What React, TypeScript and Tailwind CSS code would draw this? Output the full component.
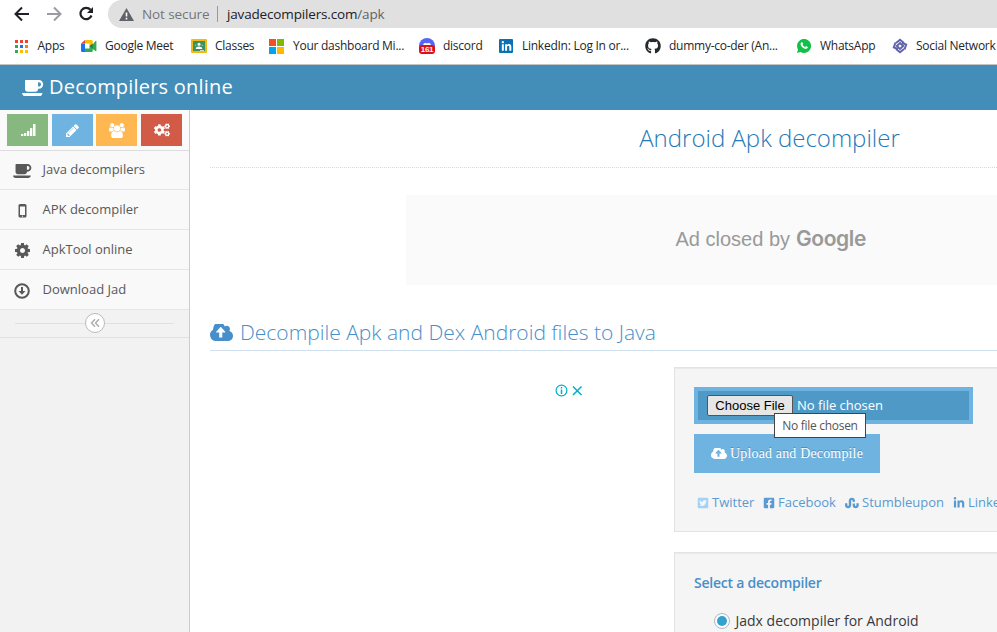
import React from 'react';
import type { ReactNode } from 'react';
import {
  FaCogs, FaTwitterSquare, FaFacebookSquare, FaStumbleupon, FaLinkedinIn, FaGithub,
} from 'react-icons/fa';

function Coffee({ className }: { className: string }) {
  return (
    <svg viewBox="0 256 1920 1408" className={className} fill="currentColor">
      <path d="M1664 640q0-80-56-136t-136-56h-64v384h64q80 0 136-56t56-136zm-1664 768h1792q0 106-75 181t-181 75h-1280q-106 0-181-75t-75-181zm1856-768q0 159-112.5 271.5t-271.5 112.5h-64v32q0 92-66 158t-158 66h-704q-92 0-158-66t-66-158v-736q0-26 19-45t45-19h1152q159 0 271.5 112.5t112.5 271.5z" />
    </svg>
  );
}

function CloudUpload({ className }: { className: string }) {
  return (
    <svg viewBox="0 256 1920 1280" preserveAspectRatio="none" className={className} fill="currentColor">
      <path d="M1280 864q0-14-9-23l-352-352q-9-9-23-9t-23 9l-351 351q-10 12-10 24 0 14 9 23t23 9h224v352q0 13 9.5 22.5t22.5 9.5h192q13 0 22.5-9.5t9.5-22.5v-352h224q13 0 22.5-9.5t9.5-22.5zm640 288q0 159-112.5 271.5t-271.5 112.5h-1088q-185 0-316.5-131.5t-131.5-316.5q0-130 70-240t188-165q-2-30-2-43 0-212 150-362t362-150q156 0 285.5 87t188.5 231q71-62 166-62 106 0 181 75t75 181q0 76-41 138 130 31 213.5 135.5t83.5 238.5z" />
    </svg>
  );
}

function Pencil() {
  return (
    <svg viewBox="128 128 1536 1536" className="size-[13px]" fill="currentColor">
      <path d="M491 1536l91-91-235-235-91 91v107h128v128h107zm523-928q0-22-22-22-10 0-17 7l-542 542q-7 7-7 17 0 22 22 22 10 0 17-7l542-542q7-7 7-17zm-54-192l416 416-832 832H128v-416zm683 96q0 53-37 90l-166 166-416-416 166-165q36-38 90-38 53 0 91 38l235 234q37 39 37 91z" />
    </svg>
  );
}

function Cog() {
  return (
    <svg viewBox="128 128 1536 1536" className="size-[15px]" fill="currentColor">
      <path d="M1152 896q0-106-75-181t-181-75-181 75-75 181 75 181 181 75 181-75 75-181zm512-109v222q0 12-8 23t-20 13l-185 28q-19 54-39 91 35 50 107 138 10 12 10 25t-9 23q-27 37-99 108t-94 71q-12 0-26-9l-138-108q-44 23-91 38-16 136-29 186-7 28-36 28H785q-14 0-24.500-8.500T749 1635l-28-184q-49-16-90-37l-141 107q-10 9-25 9-14 0-25-11-126-114-165-168-7-10-7-23 0-12 8-23 15-21 51-66.500t54-70.500q-27-50-41-99l-183-27q-13-2-21-12.500t-8-23.500V785q0-12 8-23t19-13l186-28q14-46 39-92-40-57-107-138-10-12-10-24 0-10 9-23 26-36 98.500-107.500T465 263q13 0 26 10l138 107q44-23 91-38 16-136 29-186 7-28 36-28h222q14 0 24.500 8.500T1043 158l28 184q49 16 90 37l142-107q9-9 24-9 13 0 25 10 129 119 165 170 7 8 7 22 0 12-8 23-15 21-51 66.500t-54 70.500q26 50 41 98l183 28q13 2 21 12.500t8 23.500z" />
    </svg>
  );
}

function Users() {
  return (
    <svg viewBox="0 0 1920 1792" className="h-[15px] w-4" fill="currentColor">
      <path d="M593 896q-162 5-265 128H194q-82 0-138-40.5T0 865q0-353 124-353 6 0 43.5 21t97.5 42.5T384 597q67 0 133-23-5 37-5 66 0 139 81 256zm1071 637q0 120-73 189.5t-194 69.5H523q-121 0-194-69.5T256 1533q0-53 3.5-103.5t14-109T300 1212t43-97.5 62-81 85.5-53.5T602 960q10 0 43 21.5t73 48 107 48 135 21.5 135-21.5 107-48 73-48 43-21.5q61 0 111.5 20t85.5 53.5 62 81 43 97.5 26.5 108.5 14 109 3.5 103.5zM640 256q0 106-75 181t-181 75-181-75-75-181 75-181T384 0t181 75 75 181zm704 384q0 159-112.5 271.5T960 1024 688.5 911.5 576 640t112.5-271.5T960 256t271.5 112.5T1344 640zm576 225q0 78-56 118.5t-138 40.5h-134q-103-123-265-128 81-117 81-256 0-29-5-66 66 23 133 23 59 0 119-21.5t97.5-42.5 43.5-21q124 0 124 353zm-128-609q0 106-75 181t-181 75-181-75-75-181 75-181 181-75 181 75 75 181z" />
    </svg>
  );
}

function Signal() {
  return (
    <svg viewBox="0 0 16 14" className="h-3.5 w-4" fill="currentColor">
      <path d="M1 11h2.300v2H1zM4 10h2.300v3H4zM7 8h2.300v5H7zM10 5h2.300v8H10zM13 1h2.500v12H13z" />
    </svg>
  );
}

function AppsIcon() {
  return (
    <svg viewBox="0 0 13 13" className="size-[13px]">
      <path fill="#ea4335" d="M0 0h3v3H0zM5 0h3v3H5zM10 0h3v3h-3z" />
      <path fill="#34a853" d="M0 5h3v3H0zM0 10h3v3H0z" />
      <path fill="#1a73e8" d="M5 5h3v3H5z" />
      <path fill="#ea8600" d="M10 5h3v3h-3z" />
      <path fill="#fbbc04" d="M5 10h3v3H5zM10 10h3v3h-3z" />
    </svg>
  );
}

function MeetIcon() {
  return (
    <svg viewBox="0 0 16 14" className="h-3.5 w-4">
      <path fill="#ea4335" d="M0 4.500L4 1v3.500z" />
      <path fill="#fbbc04" d="M4 1h6.500q1.200 0 1.200 1.200V6L8.500 7V4.500H4z" />
      <path fill="#1a73e8" d="M0 4.500h4V13H1.200Q0 13 0 11.800z" />
      <path fill="#34a853" d="M4 9.500h4.500V7l3.200-1.500L14.500 2q.9-.5.900.5v9q0 1-.9.500l-2.800-2v1.800q0 1.200-1.200 1.200H4z" />
      <path fill="#188038" d="M8.500 7l3.200-2.500v5z" />
    </svg>
  );
}

function ClassesIcon() {
  return (
    <svg viewBox="0 0 16 14" className="h-3.5 w-4">
      <rect width="16" height="14" rx="1" fill="#f5b912" />
      <path fill="#389360" d="M2 2h12v10H2z" />
      <circle cx="8" cy="5.300" r="1.500" fill="#fff" />
      <path fill="#fff" d="M4.800 10V9q.3-1.400 3.200-1.600 2.900.2 3.200 1.600v1z" />
      <circle cx="4.500" cy="6.300" r=".8" fill="#8bc3a2" />
      <circle cx="11.500" cy="6.300" r=".8" fill="#8bc3a2" />
      <path fill="#e0dcc0" d="M9 11h4v1H9z" />
    </svg>
  );
}

function MicrosoftIcon() {
  return (
    <svg viewBox="0 0 15 15" className="mr-px size-[15px]">
      <path fill="#f25022" d="M0 0h7v7H0z" />
      <path fill="#7fba00" d="M8 0h7v7H8z" />
      <path fill="#00a4ef" d="M0 8h7v7H0z" />
      <path fill="#ffb900" d="M8 8h7v7H8z" />
    </svg>
  );
}

function DiscordIcon() {
  return (
    <div className="relative size-4">
      <svg viewBox="0 0 16 16" className="size-4">
        <circle cx="8" cy="8" r="8" fill="#5865f2" />
        <path fill="#fff" d="M4 7q.5-2 2.300-2.300l.4.500h2.600l.4-.5Q11.500 5 12 7z" />
        <rect y="7" width="16" height="9" rx="3" fill="#dd1016" />
      </svg>
      <span className="absolute inset-x-0 top-[7px] text-center font-['Liberation_Sans',sans-serif] text-[8px] leading-[9px] font-bold text-white">161</span>
    </div>
  );
}

function LinkedInTile() {
  return (
    <div className="flex size-3.5 items-center justify-center rounded-[1px] bg-[#0a72b4] text-white">
      <FaLinkedinIn className="size-[11px]" />
    </div>
  );
}

function WhatsAppIcon() {
  return (
    <svg viewBox="0 0 14 14" className="size-3.5">
      <path fill="#10c048" d="M0 14l1-3.500A7 7 0 1 1 3.500 13z" />
      <path fill="#fff" d="M4.600 3.300q.8-.4 1.100.4l.5 1.100q.1.400-.6 1.100.8 1.500 2.500 2.200l.8-.9q.2-.2.500 0l1.300.7q.3.200.1.700-.5 1.400-2.100 1.400-2.200-.1-4.200-2.500-1.300-1.700-.9-2.900.3-.9 1-1.300z" />
    </svg>
  );
}

function SocialIcon() {
  return (
    <svg viewBox="0 0 16 16" className="size-4" fill="none" stroke="#6264ad">
      <path strokeWidth="2" d="M4 5L8 1.800 12 5M4 11l4 3.200L12 11" />
      <path strokeWidth="2" d="M3.500 4.500L1.800 9.500 6 11M12.500 11.500l1.700-5L10 5" />
      <path strokeWidth="2" d="M8 5l3.200 3L8 11 4.800 8z" />
    </svg>
  );
}

type BookmarkProps = { icon: ReactNode; label: string; width: string };

function Bookmark({ icon, label, width }: BookmarkProps) {
  return (
    <div className={`flex h-4 shrink-0 items-center gap-2 ${width}`}>
      <div className="flex size-4 shrink-0 items-center justify-center">{icon}</div>
      <span className="whitespace-nowrap">{label}</span>
    </div>
  );
}

function MenuItem({ icon, label }: { icon: ReactNode; label: string }) {
  return (
    <div className="flex h-10 items-center border-b border-[#e5e5e5] bg-[#f9f9f9] text-[13px] text-[#585858] first:h-[39px] first:pb-px">
      <div className="-mr-[1.500px] flex w-11 justify-center pt-0.5">{icon}</div>
      <span>{label}</span>
    </div>
  );
}

function BrowserBar() {
  return (
    <header className="h-[65px] border-b border-[#c4c4c4] bg-white font-['Open_Sans','Noto_Sans',sans-serif]">
      <div className="flex h-7 items-center">
        <svg viewBox="0 0 108 28" className="h-7 w-[108px] shrink-0" fill="none" strokeWidth="2">
          <path stroke="#202124" d="M29 14H16.500M22 7.500L15.500 14l6.500 6.500" />
          <path stroke="#9a9c9f" d="M47 14h12.500M54 7.500l6.500 6.500-6.500 6.500" />
          <path stroke="#202124" strokeWidth="2.200" d="M90.500 9.800A5.700 5.700 0 1 0 91.500 15.500" />
          <path fill="#202124" d="M93 7v6h-6z" />
        </svg>
        <div className="flex h-7 flex-1 items-center rounded-l-full bg-[#e0e0e0] pl-[11px]">
          <svg viewBox="0 0 15 13" className="h-[13px] w-[15px] shrink-0">
            <path fill="#5f6368" d="M7.500 0L15 13H0z" />
            <path fill="#fff" d="M6.700 4.500h1.600v4H6.700zM6.700 9.800h1.600v1.600H6.700z" />
          </svg>
          <span className="ml-2 w-[68px] shrink-0 pt-px text-[13.500px] tracking-[-0.1px] whitespace-nowrap text-[#73767a]">Not secure</span>
          <div className="ml-[7px] h-4 w-px bg-[#9a9a9a]" />
          <span className="ml-[9px] pt-px text-[13.500px] tracking-[-0.160px] whitespace-nowrap text-[#202124]">
            javadecompilers.com<span className="text-[#5f6368]">/apk</span>
          </span>
        </div>
      </div>
      <div className="flex h-9 items-center overflow-hidden pl-[13.500px] text-[12px] tracking-[-0.260px] text-[#252629]">
        <Bookmark icon={<AppsIcon />} label="Apps" width="w-[67.500px]" />
        <Bookmark icon={<MeetIcon />} label="Google Meet" width="w-[110px]" />
        <Bookmark icon={<ClassesIcon />} label="Classes" width="w-[78px]" />
        <Bookmark icon={<MicrosoftIcon />} label="Your dashboard Mi..." width="w-[150px]" />
        <Bookmark icon={<DiscordIcon />} label="discord" width="w-[79px]" />
        <Bookmark icon={<LinkedInTile />} label="LinkedIn: Log In or..." width="w-[147px]" />
        <Bookmark icon={<FaGithub className="size-4 text-[#24292e]" />} label="dummy-co-der (An..." width="w-[151px]" />
        <Bookmark icon={<WhatsAppIcon />} label="WhatsApp" width="w-[96px]" />
        <Bookmark icon={<SocialIcon />} label="Social Network" width="w-[104px]" />
      </div>
    </header>
  );
}

function Sidebar() {
  return (
    <aside className="w-[190px] shrink-0 border-r border-[#ccc] bg-[#f2f2f2]">
      <div className="flex h-[41px] gap-[3.700px] border-b border-[#ddd] bg-[#fafafa] pt-1 pl-[7px] text-white">
        <div className="flex h-8 w-[41px] items-center justify-center bg-[#87b87f]"><Signal /></div>
        <div className="flex h-8 w-[41px] items-center justify-center bg-[#6fb3e0]"><Pencil /></div>
        <div className="flex h-8 w-[41px] items-center justify-center bg-[#ffb752]"><Users /></div>
        <div className="flex h-8 w-[41px] items-center justify-center bg-[#d15b47]"><FaCogs className="size-4" /></div>
      </div>
      <nav>
        <MenuItem icon={<Coffee className="h-3.5 w-[19px]" />} label="Java decompilers" />
        <MenuItem
          icon={
            <svg viewBox="0 0 9 14" className="h-3.5 w-[9px]">
              <rect x=".5" width="8" height="13.500" rx="1.500" fill="currentColor" />
              <path fill="#f9f9f9" d="M2 2.500h5V11H2z" />
              <circle cx="4.500" cy="12.200" r=".6" fill="#f9f9f9" />
            </svg>
          }
          label="APK decompiler"
        />
        <MenuItem icon={<Cog />} label="ApkTool online" />
        <MenuItem
          icon={
            <svg viewBox="0 0 16 16" className="size-4">
              <circle cx="8" cy="8" r="6.800" fill="none" stroke="currentColor" strokeWidth="2" />
              <path fill="currentColor" d="M7 4h2v4h2.500L8 11.800 4.500 8H7z" />
            </svg>
          }
          label="Download Jad"
        />
      </nav>
      <div className="flex h-7 items-center border-b border-[#e0e0e0] px-[15px] pb-px">
        <div className="h-px flex-1 bg-[#e0e0e0]" />
        <div className="flex size-5 items-center justify-center rounded-full border border-[#bbb] bg-white">
          <svg viewBox="0 0 10 10" className="size-2.5" fill="none" stroke="#aaa" strokeWidth="1.400">
            <path d="M5 1.200L1.500 5 5 8.800M9 1.200L5.500 5 9 8.800" />
          </svg>
        </div>
        <div className="h-px flex-1 bg-[#e0e0e0]" />
      </div>
    </aside>
  );
}

function UploadPanel() {
  return (
    <section className="h-[165px] border border-[#e3e3e3] bg-[#f5f5f5] pt-[19px] pl-[19px] shadow-[inset_0_1px_1px_rgba(0,0,0,0.05)]">
      <div className="relative flex h-[37px] w-[279px] items-center border-4 border-[#6fb3e0] bg-[#4f99c6] pl-[9px]">
        <button className="h-[21px] w-[86px] rounded-[2px] border border-[#555] bg-[#e6e6e6] font-['Liberation_Sans',sans-serif] text-[13px] leading-[18px] whitespace-nowrap text-black">Choose File</button>
        <span className="ml-1 text-[13px] whitespace-nowrap text-white">No file chosen</span>
        <div className="absolute top-[22px] left-[76px] flex h-[25px] w-[92px] items-center justify-center border border-[#444] bg-white text-[12px] tracking-[-0.300px] whitespace-nowrap text-[#555]">No file chosen</div>
      </div>
      <button className="mt-2.5 flex h-[39px] w-[186px] items-center bg-[#6fb3e0] pl-[17px] font-['Liberation_Serif',serif] text-[14px] tracking-[0.160px] whitespace-nowrap text-white [text-shadow:0_-1px_0_rgba(0,0,0,0.25)]">
        <CloudUpload className="mr-[3px] h-[11px] w-4" />
        <span>Upload and Decompile</span>
      </button>
      <div className="mt-5 flex h-5 items-center pl-[3px] text-[13px] whitespace-nowrap text-[#5a9ad0]">
        <FaTwitterSquare className="mr-[3px] size-3 shrink-0 text-[#a2d2f8]" />
        <span className="w-[51px] shrink-0">Twitter</span>
        <FaFacebookSquare className="mr-[3px] size-3 shrink-0 text-[#5b9bd1]" />
        <span className="w-[67px] shrink-0">Facebook</span>
        <FaStumbleupon className="mr-[3px] size-3.5 shrink-0" />
        <span className="w-[91px] shrink-0">Stumbleupon</span>
        <FaLinkedinIn className="mr-[3px] size-3 shrink-0" />
        <span>LinkedIn</span>
      </div>
    </section>
  );
}

function OptionsPanel() {
  return (
    <section className="mt-5 h-[200px] border border-[#e3e3e3] bg-[#f5f5f5] pt-5 pl-[19px] shadow-[inset_0_1px_1px_rgba(0,0,0,0.05)]">
      <h4 className="text-sm leading-5 font-semibold tracking-[-0.230px] text-[#478fca]">Select a decompiler</h4>
      <label className="mt-[18px] flex h-5 items-center pl-5 text-sm text-[#393939]">
        <span className="mr-[5.500px] flex size-4 items-center justify-center rounded-full border border-[#adb8c0] bg-white">
          <span className="size-2.5 rounded-full bg-[#32a3ce]" />
        </span>
        Jadx decompiler for Android
      </label>
    </section>
  );
}

export default function App() {
  return (
    <div className="flex h-[632px] w-[997px] flex-col overflow-hidden bg-white font-['Open_Sans','Noto_Sans',sans-serif]">
      <BrowserBar />
      <div className="flex h-[45px] shrink-0 items-center bg-[#438eb9] pl-[22px] text-xl text-white">
        <Coffee className="mr-[5px] h-4 w-[22px]" />
        <span className="pb-px tracking-[0.200px]">Decompilers online</span>
      </div>
      <div className="flex min-h-0 flex-1">
        <Sidebar />
        <main className="min-w-0 flex-1 overflow-hidden pl-5">
          <div className="h-[58px] w-[1119px] border-b border-dotted border-[#d8d8d8] pt-2.5 text-center">
            <h1 className="text-2xl leading-9 font-light text-[#2679b5]">Android Apk decompiler</h1>
          </div>
          <div className="mt-[27px] ml-[196px] flex h-[90px] w-[728px] items-center bg-[#fafafa] pb-0.5 pl-[269.500px] font-['Liberation_Sans',sans-serif] text-xl whitespace-nowrap text-[#999]">
            Ad closed by
            <span className="ml-1.5 font-['Inter',sans-serif] text-[21px] font-semibold tracking-[-0.400px]">Google</span>
          </div>
          <div className="mt-[27px] flex h-[39px] w-[1119px] items-center border-b border-[#cfe0ef] pt-0.5 text-[#478fca]">
            <CloudUpload className="mr-[7px] h-[17px] w-[23px]" />
            <h2 className="text-[21px] leading-8 font-light">Decompile Apk and Dex Android files to Java</h2>
          </div>
          <div className="mt-4 flex">
            <div className="w-[464px] shrink-0 pt-[17px] pl-[345px]">
              <svg viewBox="0 0 30 14" className="h-3.5 w-[30px]" fill="none" stroke="#00aecd" strokeWidth="1.200">
                <circle cx="6.500" cy="6.500" r="5.400" />
                <path strokeWidth="1.500" d="M6.500 5.500V10M6.500 3v1.400M18 2.500l8.500 8.500M26.500 2.500L18 11" />
              </svg>
            </div>
            <div className="w-[655px] shrink-0">
              <UploadPanel />
              <OptionsPanel />
            </div>
          </div>
        </main>
      </div>
    </div>
  );
}
